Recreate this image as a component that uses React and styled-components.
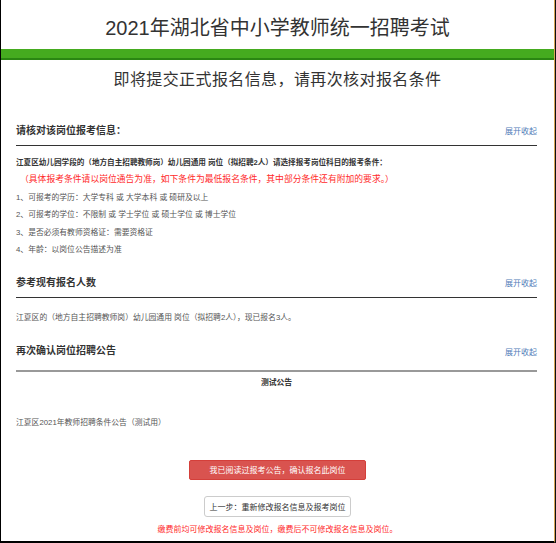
import React from "react";
import styled, { createGlobalStyle } from "styled-components";

const GlobalStyle = createGlobalStyle`
  html, body {
    margin: 0;
    padding: 0;
    background: #fff;
  }
  body {
    font-family: "Liberation Sans", "Noto Sans CJK SC", sans-serif;
    color: #333;
  }
`;

const sections = [
  {
    title: "请核对该岗位报考信息：",
    line: "dark",
  },
  {
    title: "参考现有报名人数",
    line: "dark",
  },
  {
    title: "再次确认岗位招聘公告",
    line: "gray",
  },
];

const conditions = [
  "1、可报考的学历：大学专科 或 大学本科 或 硕研及以上",
  "2、可报考的学位：不限制 或 学士学位 或 硕士学位 或 博士学位",
  "3、是否必须有教师资格证：需要资格证",
  "4、年龄：以岗位公告描述为准",
];

function Section({ title, line, children }) {
  return (
    <Block>
      <BlockHead $line={line}>
        <BlockTitle>{title}</BlockTitle>
        <Toggle>展开收起</Toggle>
      </BlockHead>
      {children}
    </Block>
  );
}

export default function App() {
  return (
    <>
      <GlobalStyle />
      <Outer>
        <Frame>
          <Header>
            <Title>2021年湖北省中小学教师统一招聘考试</Title>
          </Header>
          <GreenBar />
          <SubTitle>即将提交正式报名信息，请再次核对报名条件</SubTitle>

          <Content>
            <Section {...sections[0]}>
              <Body $pt={8}>
                <Strong>
                  江夏区幼儿园学段的（地方自主招聘教师岗）幼儿园通用 岗位（拟招聘2人）请选择报考岗位科目的报考条件：
                </Strong>
                <Warn>
                  （具体报考条件请以岗位通告为准，如下条件为最低报名条件，其中部分条件还有附加的要求。）
                </Warn>
                {conditions.map((c) => (
                  <Line key={c}>{c}</Line>
                ))}
              </Body>
            </Section>

            <Section {...sections[1]}>
              <Body $pt={11}>
                <Line>
                  江夏区的（地方自主招聘教师岗）幼儿园通用 岗位（拟招聘2人），现已报名3人。
                </Line>
              </Body>
            </Section>

            <Section {...sections[2]}>
              <Body $pt={2}>
                <NoticeTitle>测试公告</NoticeTitle>
                <NoticeText>江夏区2021年教师招聘条件公告（测试用）</NoticeText>
              </Body>
            </Section>
          </Content>

          <Actions>
            <PrimaryBtn>我已阅读过报考公告，确认报名此岗位</PrimaryBtn>
            <DefaultBtn>上一步：重新修改报名信息及报考岗位</DefaultBtn>
            <Tip>缴费前均可修改报名信息及岗位，缴费后不可修改报名信息及岗位。</Tip>
          </Actions>
        </Frame>
      </Outer>
    </>
  );
}

const Outer = styled.div`
  width: 556px;
  height: 543px;
  box-sizing: border-box;
  border-right: 1px solid #111;
  overflow: hidden;
`;

const Frame = styled.div`
  height: 543px;
  box-sizing: border-box;
  border-left: 1px solid #000;
  border-right: 1px solid #d8a657;
  border-bottom: 2px solid #000;
  display: flex;
  flex-direction: column;
`;

const Header = styled.div`
  height: 49px;
  display: flex;
  justify-content: center;
  align-items: flex-start;
  padding-top: 16px;
  box-sizing: border-box;
`;

const Title = styled.h1`
  margin: 0;
  font-size: 20px;
  line-height: 24px;
  font-weight: 400;
  color: #333;
`;

const GreenBar = styled.div`
  height: 9px;
  background: #45ab1f;
  border-bottom: 2px solid #2a8612;
`;

const SubTitle = styled.h2`
  margin: 8px 0 0;
  text-align: center;
  font-size: 16px;
  line-height: 24px;
  letter-spacing: 0.4px;
  font-weight: 400;
  color: #333;
`;

const Content = styled.div`
  padding: 0 17px 0 15px;
  margin-top: 26px;
  display: flex;
  flex-direction: column;
  gap: 12px;
`;

const Block = styled.div`
  display: flex;
  flex-direction: column;
`;

const BlockHead = styled.div`
  display: flex;
  justify-content: space-between;
  align-items: center;
  height: 22px;
  padding-bottom: ${(p) => (p.$line === "gray" ? 9 : 5)}px;
  border-bottom: ${(p) =>
    p.$line === "gray" ? "2px solid #999" : "1px solid #333"};
`;

const BlockTitle = styled.span`
  font-size: 10px;
  font-weight: 700;
  color: #333;
`;

const Toggle = styled.span`
  font-size: 8px;
  color: #4f7cb8;
  padding-top: 3px;
`;

const Body = styled.div`
  padding-top: ${(p) => p.$pt}px;
  font-size: 7.8px;
  line-height: 17.4px;
  color: #555;
`;

const Line = styled.div`
  white-space: nowrap;
`;

const Strong = styled(Line)`
  font-weight: 700;
  font-size: 7.6px;
  color: #333;
`;

const Warn = styled(Line)`
  color: #ff2a2a;
  font-size: 8.8px;
  padding-left: 4px;
`;

const NoticeTitle = styled.div`
  text-align: center;
  font-weight: 700;
  color: #333;
`;

const NoticeText = styled.div`
  margin-top: 23px;
`;

const Actions = styled.div`
  display: flex;
  flex-direction: column;
  align-items: center;
  margin-top: 28px;
`;

const PrimaryBtn = styled.button`
  width: 177px;
  height: 20px;
  padding: 0;
  border: 1px solid #d43f3a;
  border-radius: 2px;
  background: #d9534f;
  color: #fff;
  font-family: inherit;
  font-size: 8px;
`;

const DefaultBtn = styled.button`
  width: 147px;
  height: 21px;
  margin-top: 16px;
  padding: 0;
  border: 1px solid #ccc;
  border-radius: 3px;
  background: #fff;
  color: #333;
  font-family: inherit;
  font-size: 8px;
`;

const Tip = styled.div`
  margin-top: 7px;
  font-size: 8px;
  line-height: 12px;
  color: #ff2a2a;
`;
